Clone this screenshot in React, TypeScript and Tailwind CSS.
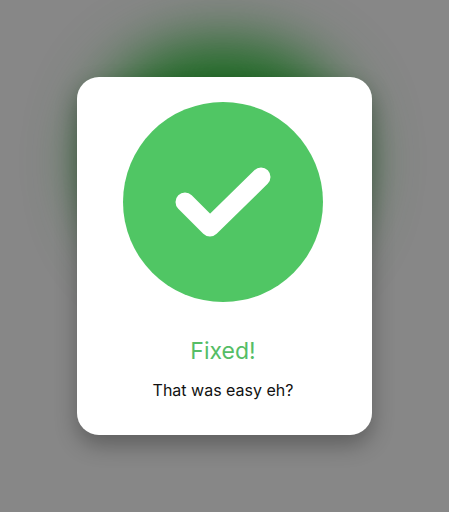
export default function App() {
  return (
    <div className="flex h-[512px] w-full items-center justify-center overflow-hidden bg-[#878787] font-['Inter',sans-serif]">
      <div className="relative h-[358px] w-[295px]">
        {/* green glow from the badge, sits behind the card */}
        <div className="absolute left-[12px] top-[-36px] h-[240px] w-[268px] rounded-full bg-[#1c6a22] blur-[30px]" />
        <div className="absolute inset-0 rounded-[22px] shadow-[0_10px_22px_rgba(0,0,0,0.3)]" />
        <div className="relative flex h-full flex-col items-center rounded-[22px] bg-white pt-[25px] pr-[3px]">
          <div className="flex h-[200px] w-[200px] items-center justify-center rounded-full bg-[#50c664]">
            <svg width="200" height="200" viewBox="0 0 200 200" fill="none">
              <path
                d="M62 100 L87 125 L138 75"
                stroke="white"
                strokeWidth="19"
                strokeLinecap="round"
                strokeLinejoin="round"
              />
            </svg>
          </div>
          <h1 className="mt-[33px] text-[23px] leading-8 font-normal text-[#55bd66]">Fixed!</h1>
          <p className="mt-[11px] text-base leading-6 text-[#111]">That was easy eh?</p>
        </div>
      </div>
    </div>
  )
}
